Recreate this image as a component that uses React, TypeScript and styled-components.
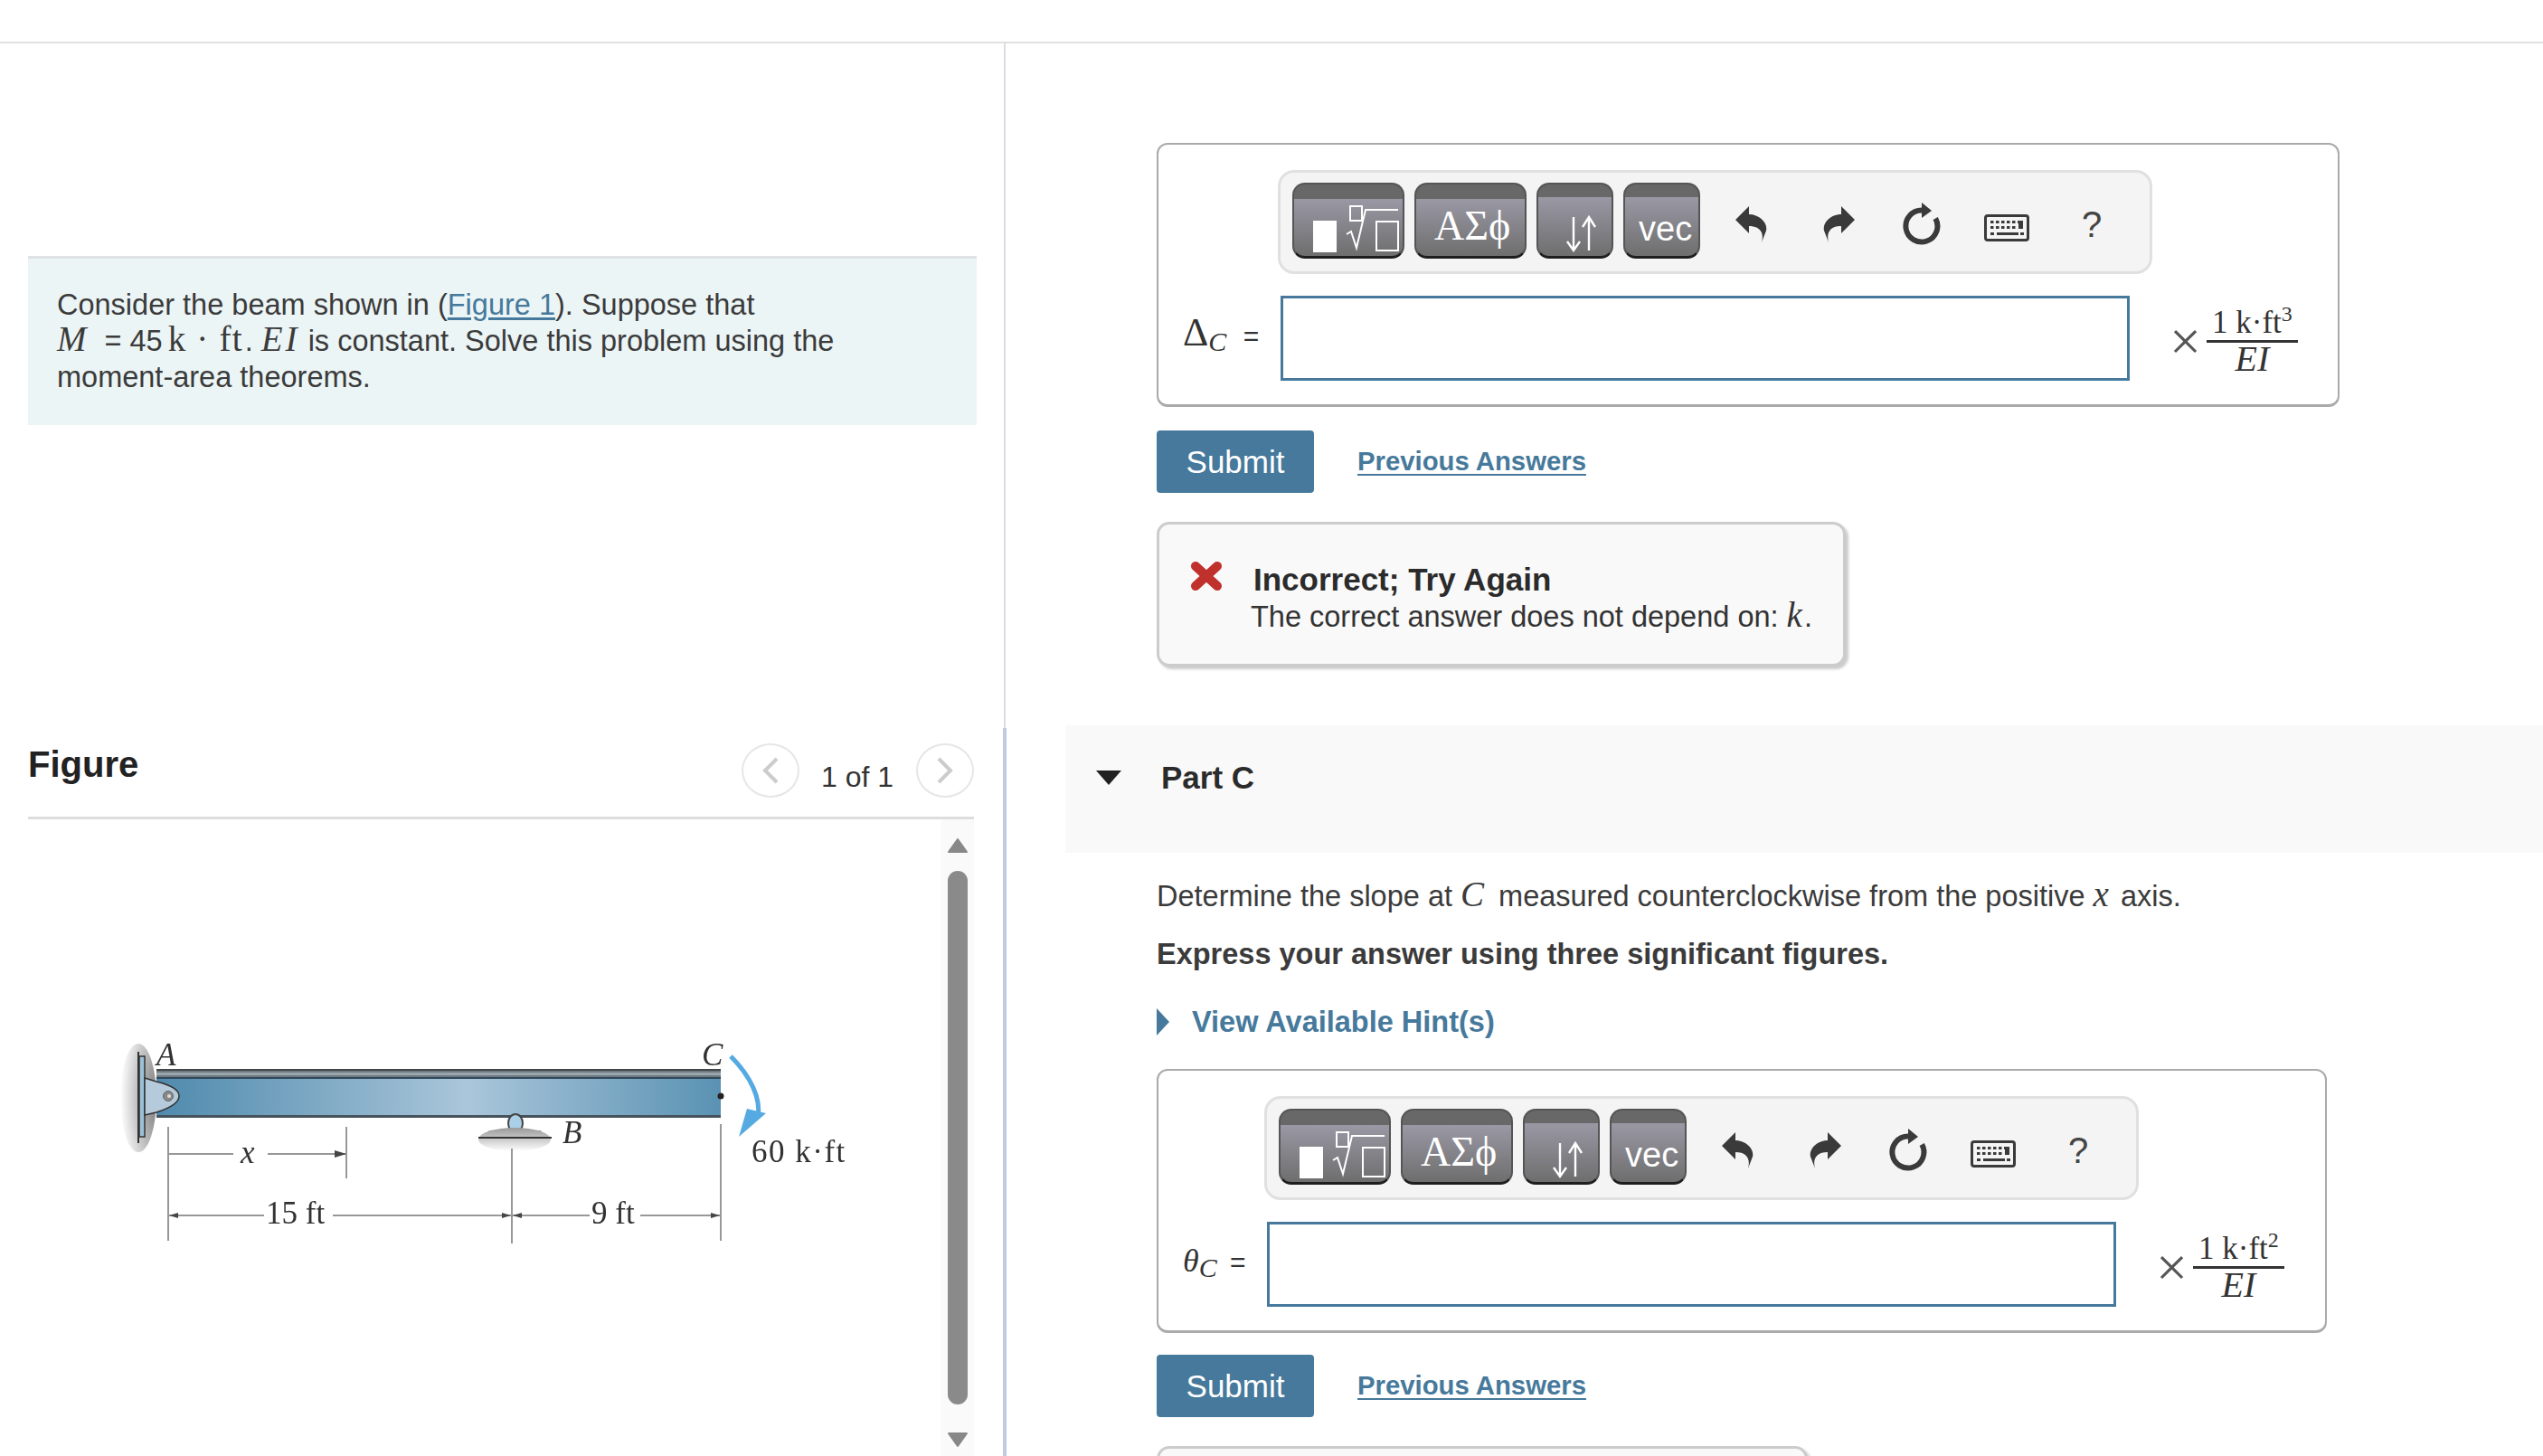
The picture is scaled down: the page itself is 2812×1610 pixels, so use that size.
import React from "react"
import styled, { createGlobalStyle } from "styled-components"

const BLUE = "#46799b"

const GlobalStyle = createGlobalStyle`
  html, body {
    margin: 0;
    padding: 0;
    background: #fff;
    overflow: hidden;
    font-family: "Liberation Sans", Arial, sans-serif;
    color: #333;
  }
`

const BeamFigure = () => (
  <FigureSvg viewBox="0 906 1040 704">
    <defs>
      <linearGradient id="web" x1="0" x2="1" y1="0" y2="0">
        <stop offset="0" stopColor="#4f8aad" />
        <stop offset="0.55" stopColor="#aac6da" />
        <stop offset="1" stopColor="#5a92b3" />
      </linearGradient>
      <radialGradient id="wallShade" cx="1" cy="0.5" r="1">
        <stop offset="0" stopColor="#777" />
        <stop offset="1" stopColor="#fff" />
      </radialGradient>
      <linearGradient id="baseShade" x1="0" x2="0" y1="0" y2="1">
        <stop offset="0" stopColor="#999" />
        <stop offset="1" stopColor="#fff" />
      </linearGradient>
      <filter id="soft">
        <feGaussianBlur stdDeviation="0.6" />
      </filter>
    </defs>
    <g filter="url(#soft)">
      <ellipse cx="153" cy="1214" rx="20" ry="60" fill="url(#wallShade)" />
      <rect x="154" y="1168" width="6" height="89" fill="#9cc0d6" stroke="#333" strokeWidth="1.5" />
      <path d="M153 1163V1264" stroke="#333" strokeWidth="2" />

      <rect x="173" y="1183" width="624" height="52" fill="url(#web)" />
      <rect x="173" y="1183" width="624" height="9" fill="#6e7a82" />
      <rect x="173" y="1186" width="624" height="3" fill="#9aa5ac" />
      <rect x="173" y="1191" width="624" height="2" fill="#31465a" />
      <rect x="173" y="1233" width="624" height="3" fill="#47535c" />
      <rect x="173" y="1182" width="624" height="2" fill="#444" />
      <circle cx="797" cy="1212" r="3.5" fill="#222" />

      <path d="M160 1192L173 1196Q198 1202 198 1212Q198 1222 173 1230L160 1233Z" fill="#b5cbdb" stroke="#333" strokeWidth="1.5" />
      <circle cx="186" cy="1212" r="5.5" fill="#888" stroke="#666" />
      <circle cx="187" cy="1212" r="2" fill="#ddd" />

      <ellipse cx="570" cy="1242" rx="8" ry="10" fill="#a9d0e6" stroke="#444" strokeWidth="2" />
      <rect x="541" y="1251" width="57" height="6" fill="#6e7a82" stroke="#444" />
      <ellipse cx="569" cy="1260" rx="40" ry="13" fill="url(#baseShade)" />
      <rect x="529" y="1257" width="81" height="2" fill="#333" />

      <g stroke="#777" strokeWidth="1.5" fill="none">
        <path d="M186 1246V1372M383 1246V1303M566 1270V1375M797 1243V1372" />
        <path d="M187 1276H258M296 1276H382" />
        <path d="M187 1344H292M368 1344H565M567 1344H652M708 1344H796" />
      </g>
      <g fill="#444">
        <path d="M383 1276L370 1272V1280Z" />
        <path d="M187 1344L197 1341V1347Z" />
        <path d="M565 1344L555 1341V1347Z" />
        <path d="M567 1344L577 1341V1347Z" />
        <path d="M796 1344L786 1341V1347Z" />
      </g>

      <path d="M808 1168C830 1190 842 1215 838 1236" stroke="#55aae2" strokeWidth="5" fill="none" />
      <path d="M817 1257L826 1226L847 1231Z" fill="#55aae2" />

      <g fontFamily="'Liberation Serif', serif" fill="#333">
        <Label x="173" y="1178" $italic>A</Label>
        <Label x="776" y="1178" $italic>C</Label>
        <Label x="622" y="1264" $italic>B</Label>
        <Label x="266" y="1286" $italic>x</Label>
        <Label x="294" y="1353">15 ft</Label>
        <Label x="654" y="1353">9 ft</Label>
        <Label x="831" y="1285" letterSpacing="1.5">60 k·ft</Label>
      </g>
    </g>
  </FigureSvg>
)

const UndoIcon = ({ flip }: { flip?: boolean }) => (
  <ArrowSvg $flip={flip} viewBox="0 0 40 46">
    <path d="M3 18L18 3V12C30 12 39 22 37 30L32 43C35 32 30 25 18 25V33Z" fill="#3a3a3a" />
  </ArrowSvg>
)

const RefreshIcon = () => (
  <svg width="48" height="54" viewBox="0 0 48 54">
    <path d="M24 11.5A17.5 17.5 0 1 0 39.2 20.5" fill="none" stroke="#3a3a3a" strokeWidth="6" />
    <path d="M24 3L35 12L24 20Z" fill="#3a3a3a" />
  </svg>
)

const KeyboardIcon = () => (
  <svg width="50" height="30" viewBox="0 0 50 30">
    <rect x="1.5" y="1.5" width="47" height="27" rx="2.5" fill="none" stroke="#3a3a3a" strokeWidth="3" />
    <g fill="#3a3a3a">
      {[7, 13, 19, 25, 31, 37].map(x => <rect key={x} x={x} y="7" width="3.5" height="3" />)}
      {[7, 13, 19, 25, 31].map(x => <rect key={x} x={x} y="13" width="3.5" height="3" />)}
      <rect x="38" y="7" width="5" height="9" />
      <rect x="7" y="20" width="4" height="3" />
      <rect x="14" y="20" width="24" height="3" />
      <rect x="40" y="20" width="4" height="3" />
    </g>
  </svg>
)

const RadicalGlyph = () => (
  <svg width="124" height="84" viewBox="0 0 124 84">
    <rect x="23" y="42" width="26" height="35" fill="#fff" />
    <rect x="64" y="26" width="13" height="16" fill="none" stroke="#fff" strokeWidth="2" />
    <path d="M60 57L65 54L71 72L81 30H117" fill="none" stroke="#fff" strokeWidth="2" />
    <rect x="93" y="43" width="24" height="32" fill="none" stroke="#fff" strokeWidth="2" />
  </svg>
)

const ArrowsGlyph = () => (
  <svg width="85" height="84" viewBox="0 0 85 84">
    <path d="M41 38V74M34 65L41 75L48 65M58 75V39M51 49L58 38L65 49" fill="none" stroke="#fff" strokeWidth="2.4" />
  </svg>
)

const Toolbar = ({ left }: { left: number }) => (
  <ToolbarWrap $left={left}>
    <ToolButton $w={124} $strip={16}><RadicalGlyph /></ToolButton>
    <ToolButton $w={124} $strip={16}><GreekGlyph>ΑΣϕ</GreekGlyph></ToolButton>
    <ToolButton $w={85} $strip={14}><ArrowsGlyph /></ToolButton>
    <ToolButton $w={85} $strip={14}><VecGlyph>vec</VecGlyph></ToolButton>
    <IconSlot $w={98} $first><UndoIcon /></IconSlot>
    <IconSlot $w={98}><UndoIcon flip /></IconSlot>
    <IconSlot $w={84}><RefreshIcon /></IconSlot>
    <IconSlot $w={104} $drop={8}><KeyboardIcon /></IconSlot>
    <IconSlot $w={84}><HelpGlyph>?</HelpGlyph></IconSlot>
  </ToolbarWrap>
)

interface AnswerProps {
  width: number
  label: React.ReactNode
  power: number
  labelWidth: number
}

const AnswerPanel = ({ width, label, power, labelWidth }: AnswerProps) => (
  <AnswerBox $w={width}>
    <Toolbar left={labelWidth - 3} />
    <InputRow>
      <FieldLabel $w={labelWidth}>{label}</FieldLabel>
      <AnswerInput />
      <TimesSign>×</TimesSign>
      <Fraction>
        <Numerator>1 k·ft<sup>{power}</sup></Numerator>
        <Denominator>EI</Denominator>
      </Fraction>
    </InputRow>
  </AnswerBox>
)

const ActionRow = ({ top }: { top: number }) => (
  <Actions $top={top}>
    <SubmitButton>Submit</SubmitButton>
    <PrevLink href="#">Previous Answers</PrevLink>
  </Actions>
)

export default function App() {
  return (
    <>
      <GlobalStyle />
      <Page>
        <TopBar />
        <Split>
          <LeftPane>
            <ProblemBox>
              Consider the beam shown in (<FigureLink href="#">Figure 1</FigureLink>). Suppose that
              <br />
              <MathVar $track={11}>M</MathVar> = 45 <MathRoman>k · ft</MathRoman><Dot>.</Dot> <MathVar $track={3}>EI</MathVar> is constant. Solve this problem using the
              <br />
              moment-area theorems.
            </ProblemBox>
            <FigureHeader>
              <FigureTitle>Figure</FigureTitle>
              <Pager>
                <PagerButton>
                  <svg width="20" height="30" viewBox="0 0 20 30"><path d="M17 2L4 15L17 28" fill="none" stroke="#ccc" strokeWidth="4" /></svg>
                </PagerButton>
                <PagerText>1 of 1</PagerText>
                <PagerButton>
                  <svg width="20" height="30" viewBox="0 0 20 30"><path d="M3 2L16 15L3 28" fill="none" stroke="#ccc" strokeWidth="4" /></svg>
                </PagerButton>
              </Pager>
            </FigureHeader>
            <FigureBody>
              <BeamFigure />
              <ScrollTrack>
                <svg width="24" height="18" viewBox="0 0 24 18"><path d="M12 2L22 16H2Z" fill="#888" stroke="#888" strokeWidth="2" strokeLinejoin="round" /></svg>
                <ScrollThumb />
                <svg width="24" height="18" viewBox="0 0 24 18"><path d="M12 16L22 2H2Z" fill="#888" stroke="#888" strokeWidth="2" strokeLinejoin="round" /></svg>
              </ScrollTrack>
            </FigureBody>
          </LeftPane>
          <Divider>
            <DividerTop />
            <DividerBottom />
          </Divider>
          <RightPane>
            <PartContent>
              <AnswerPanel
                width={1308}
                labelWidth={135}
                power={3}
                label={<><Delta>Δ</Delta><Sub $gap={10}>C</Sub> =</>}
              />
              <ActionRow top={26} />
              <Feedback $w={762}>
                <CrossIcon viewBox="0 0 36 34">
                  <path d="M6 6L30 28M30 6L6 28" stroke="#c0302c" strokeWidth="10" strokeLinecap="round" />
                </CrossIcon>
                <div>
                  <FeedbackTitle>Incorrect; Try Again</FeedbackTitle>
                  <FeedbackText>The correct answer does not depend on: <MathVar $track={2}>k</MathVar>.</FeedbackText>
                </div>
              </Feedback>
            </PartContent>
            <PartHeader>
              <svg width="28" height="16" viewBox="0 0 28 16"><path d="M0 0H28L14 16Z" fill="#222" /></svg>
              <PartTitle>Part C</PartTitle>
            </PartHeader>
            <PartContent>
              <Prompt>
                Determine the slope at <MathVar $track={7}>C</MathVar> measured counterclockwise from the positive <MathVar $track={4}>x</MathVar> axis.
              </Prompt>
              <Instruction>Express your answer using three significant figures.</Instruction>
              <HintRow>
                <svg width="14" height="30" viewBox="0 0 14 30"><path d="M0 0L14 15L0 30Z" fill={BLUE} /></svg>
                <HintLink>View Available Hint(s)</HintLink>
              </HintRow>
              <AnswerPanelSpacer />
              <AnswerPanel
                width={1294}
                labelWidth={120}
                power={2}
                label={<><MathVar>θ</MathVar><Sub $gap={6}>C</Sub> =</>}
              />
              <ActionRow top={24} />
              <Feedback $w={720} />
            </PartContent>
          </RightPane>
        </Split>
      </Page>
    </>
  )
}

const Page = styled.div`
  width: 2812px;
  height: 1610px;
  overflow: hidden;
  display: flex;
  flex-direction: column;
`

const TopBar = styled.div`
  height: 46px;
  flex: none;
  border-bottom: 2px solid #e0e0e0;
`

const Split = styled.div`
  flex: 1;
  display: flex;
  min-height: 0;
`

const LeftPane = styled.section`
  width: 1109px;
  flex: none;
  padding: 235px 0 0 31px;
  box-sizing: border-box;
`

const ProblemBox = styled.div`
  width: 1049px;
  height: 187px;
  box-sizing: border-box;
  padding: 31px 32px 0;
  background: #ecf5f6;
  border-top: 3px solid #dfe3e4;
  font-size: 32.5px;
  line-height: 40px;
  color: #3b3b3b;
`

const FigureLink = styled.a`
  color: ${BLUE};
  text-decoration: underline;
  text-underline-offset: 3px;
`

const MathVar = styled.i<{ $track?: number }>`
  font-family: "Liberation Serif", serif;
  font-size: 1.2em;
  line-height: 0;
  letter-spacing: ${p => p.$track ?? 0}px;
`

const MathRoman = styled.span`
  font-family: "Liberation Serif", serif;
  font-size: 1.2em;
  line-height: 0;
  letter-spacing: 1.2px;
  margin-left: -3px;
`

const Dot = styled.span`
  margin-left: 2px;
`

const FigureHeader = styled.div`
  width: 1046px;
  height: 84px;
  margin-top: 352px;
  box-sizing: border-box;
  display: flex;
  justify-content: space-between;
  align-items: flex-start;
  border-bottom: 3px solid #ddd;
`

const FigureTitle = styled.h2`
  margin: 0;
  font-size: 40px;
  line-height: 46px;
  font-weight: 700;
  color: #222;
`

const Pager = styled.div`
  display: flex;
  align-items: flex-start;
  gap: 24px;
`

const PagerButton = styled.span`
  width: 64px;
  height: 60px;
  box-sizing: border-box;
  border: 2px solid #e6e6e6;
  border-radius: 50%;
  display: flex;
  align-items: center;
  justify-content: center;
`

const PagerText = styled.span`
  font-size: 32px;
  line-height: 60px;
  margin-top: 7px;
  margin-right: 1px;
  color: #333;
`

const FigureBody = styled.div`
  width: 1077px;
  height: 704px;
  margin-left: -31px;
  display: flex;
`

const FigureSvg = styled.svg`
  width: 1040px;
  height: 704px;
  flex: none;
`

const Label = styled.text<{ $italic?: boolean }>`
  font-size: 35px;
  font-style: ${p => (p.$italic ? "italic" : "normal")};
`

const ScrollTrack = styled.div`
  width: 37px;
  height: 704px;
  box-sizing: border-box;
  padding-top: 20px;
  background: #fafafa;
  display: flex;
  flex-direction: column;
  align-items: center;
`

const ScrollThumb = styled.div`
  width: 22px;
  height: 590px;
  flex: none;
  margin: 19px 0 30px;
  background: #8a8a8a;
  border-radius: 11px;
`

const Divider = styled.div`
  width: 4px;
  flex: none;
  display: flex;
  flex-direction: column;
  align-items: flex-end;
`

const DividerTop = styled.div`
  width: 2px;
  height: 757px;
  margin-right: 1px;
  background: #dadde2;
`

const DividerBottom = styled.div`
  flex: 1;
  width: 4px;
  background: #c0cde0;
`

const RightPane = styled.section`
  flex: 1;
  min-width: 0;
  padding: 110px 0 0 65px;
`

const PartContent = styled.div`
  padding-left: 101px;
`

const AnswerBox = styled.div<{ $w: number }>`
  width: ${p => p.$w}px;
  height: 292px;
  box-sizing: border-box;
  padding-top: 28px;
  border: 2px solid #aaa;
  border-bottom-width: 3px;
  border-radius: 12px;
`

const ToolbarWrap = styled.div<{ $left: number }>`
  width: 967px;
  height: 115px;
  box-sizing: border-box;
  margin-left: ${p => p.$left}px;
  padding: 11px 0 0 13px;
  background: #f4f4f4;
  border: 3px solid #e0e0e0;
  border-radius: 18px;
  display: flex;
  align-items: flex-start;
  gap: 11px;
`

const ToolButton = styled.div<{ $w: number; $strip: number }>`
  width: ${p => p.$w}px;
  height: 84px;
  flex: none;
  box-sizing: border-box;
  display: flex;
  align-items: flex-end;
  overflow: hidden;
  color: #fff;
  border: 2px solid #555;
  border-bottom: 3px solid #1e1e1e;
  border-radius: 14px;
  background: linear-gradient(#686868 ${p => p.$strip}px, #9a98a4 ${p => p.$strip}px, #6e6e6e 100%);
  svg {
    flex: none;
    margin: 0 -2px -3px;
  }
`

const GreekGlyph = styled.span`
  font-family: "Liberation Serif", serif;
  font-size: 46px;
  line-height: 48px;
  padding: 0 0 9px 20px;
  white-space: nowrap;
`

const VecGlyph = styled.span`
  font-size: 38px;
  line-height: 44px;
  padding: 0 0 8px 15px;
`

const IconSlot = styled.div<{ $w: number; $first?: boolean; $drop?: number }>`
  width: ${p => p.$w}px;
  height: 84px;
  flex: none;
  box-sizing: border-box;
  margin-left: ${p => (p.$first ? "-4px" : "-11px")};
  display: flex;
  justify-content: center;
  align-items: center;
  padding-top: ${p => 8 + (p.$drop ?? 0)}px;
`

const ArrowSvg = styled.svg<{ $flip?: boolean }>`
  width: 40px;
  height: 46px;
  transform: ${p => (p.$flip ? "scaleX(-1)" : "none")};
`

const HelpGlyph = styled.span`
  font-size: 40px;
  line-height: 46px;
  color: #444;
`

const InputRow = styled.div`
  display: flex;
  align-items: center;
  margin-top: 24px;
  padding-left: 27px;
`

const FieldLabel = styled.span<{ $w: number }>`
  width: ${p => p.$w - 27}px;
  flex: none;
  margin-top: -4px;
  font-size: 30px;
  line-height: 40px;
  white-space: nowrap;
  color: #333;
`

const Delta = styled.span`
  font-family: "Liberation Serif", serif;
  font-size: 44px;
  line-height: 0;
`

const Sub = styled.i<{ $gap: number }>`
  font-family: "Liberation Serif", serif;
  font-size: 30px;
  line-height: 0;
  vertical-align: -6px;
  margin-right: ${p => p.$gap}px;
`

const AnswerInput = styled.div`
  width: 939px;
  height: 94px;
  flex: none;
  box-sizing: border-box;
  background: #fff;
  border: 3px solid ${BLUE};
`

const TimesSign = styled.span`
  font-family: "Liberation Serif", serif;
  font-size: 62px;
  line-height: 50px;
  color: #555;
  margin: 6px 0 0 44px;
`

const Fraction = styled.span`
  display: inline-flex;
  flex-direction: column;
  align-items: center;
  width: 101px;
  margin: 5px 0 0 6px;
  font-family: "Liberation Serif", serif;
  color: #333;
`

const Numerator = styled.span`
  width: 100%;
  text-align: center;
  font-size: 35px;
  line-height: 38px;
  white-space: nowrap;
  border-bottom: 3px solid #333;
  sup {
    font-size: 24px;
    line-height: 0;
  }
`

const Denominator = styled.i`
  font-size: 40px;
  line-height: 36px;
`

const Actions = styled.div<{ $top: number }>`
  display: flex;
  align-items: center;
  gap: 48px;
  margin-top: ${p => p.$top}px;
`

const SubmitButton = styled.button`
  width: 174px;
  height: 69px;
  border: 0;
  border-radius: 4px;
  background: ${BLUE};
  color: #fff;
  font-family: inherit;
  font-size: 35px;
  padding: 0;
`

const PrevLink = styled.a`
  font-size: 29.3px;
  font-weight: 700;
  color: ${BLUE};
  text-decoration: underline;
  text-underline-offset: 4px;
  margin-bottom: 2px;
`

const Feedback = styled.div<{ $w: number }>`
  width: ${p => p.$w}px;
  height: 160px;
  margin-top: 32px;
  box-sizing: border-box;
  padding: 40px 0 0 34px;
  background: #f9f9f9;
  border: 3px solid #ccc;
  border-radius: 14px;
  box-shadow: 3px 3px 3px #ccc;
  display: flex;
  gap: 34px;
`

const CrossIcon = styled.svg`
  width: 36px;
  height: 34px;
  flex: none;
`

const FeedbackTitle = styled.div`
  font-size: 35px;
  line-height: 41px;
  font-weight: 700;
  color: #2b2b2b;
`

const FeedbackText = styled.div`
  font-size: 32.5px;
  line-height: 40px;
  margin: 1px 0 0 -3px;
  color: #333;
`

const PartHeader = styled.div`
  height: 141px;
  margin-top: 65px;
  box-sizing: border-box;
  padding: 38px 0 0 34px;
  background: #f9f9f9;
  display: flex;
  gap: 44px;
  svg {
    margin-top: 12px;
  }
`

const PartTitle = styled.h3`
  margin: 0;
  font-size: 35px;
  line-height: 40px;
  font-weight: 700;
  color: #2b2b2b;
`

const Prompt = styled.p`
  margin: 28px 0 0;
  font-size: 32.5px;
  line-height: 40px;
  color: #3b3b3b;
`

const Instruction = styled.p`
  margin: 24px 0 0;
  font-size: 32.5px;
  line-height: 40px;
  font-weight: 700;
  color: #3b3b3b;
`

const HintRow = styled.div`
  display: flex;
  align-items: center;
  gap: 25px;
  margin-top: 35px;
`

const HintLink = styled.span`
  font-size: 32.5px;
  line-height: 40px;
  font-weight: 700;
  color: ${BLUE};
`

const AnswerPanelSpacer = styled.div`
  height: 32px;
`
